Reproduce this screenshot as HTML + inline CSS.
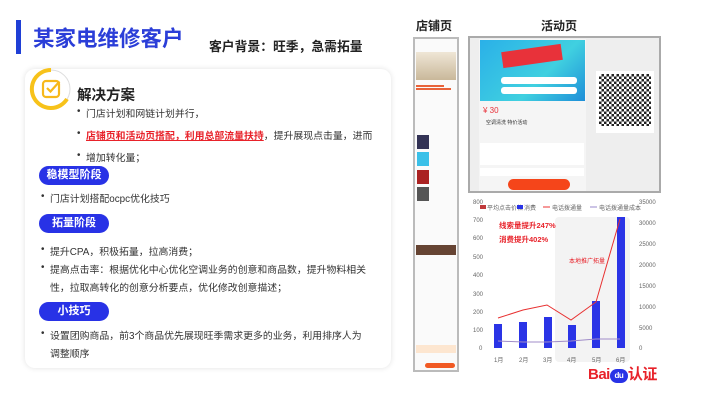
<!DOCTYPE html>
<html><head><meta charset="utf-8"><style>
*{margin:0;padding:0;box-sizing:border-box}
body{width:702px;height:406px;background:#fff;position:relative;overflow:hidden;font-family:"Liberation Sans","Noto Sans CJK SC",sans-serif;color:#333}
.a{position:absolute;white-space:nowrap}
.pill{position:absolute;left:39px;width:70px;height:19px;border-radius:10px;background:#2832e6;color:#fff;font-size:11px;font-weight:bold;text-align:center;line-height:19px}
.t{position:absolute;font-size:9.9px;color:#333;white-space:nowrap}
.t:before{content:"•";position:absolute;left:-9px}
</style></head><body>
<div class="a" style="left:16px;top:20px;width:5px;height:34px;background:#1f3fd6"></div>
<div class="a" style="left:33px;top:22px;font-size:21.5px;font-weight:bold;color:#2b3ed8">某家电维修客户</div>
<div class="a" style="left:209px;top:36px;font-size:12.8px;font-weight:bold;color:#222">客户背景：旺季，急需拓量</div>

<div class="a" style="left:25px;top:69px;width:366px;height:299px;border-radius:10px;background:#fff;box-shadow:0 0 6px rgba(0,0,0,0.12)"></div>
<svg class="a" style="left:29px;top:67px" width="44" height="44" viewBox="0 0 44 44">
<circle cx="22" cy="22" r="19" fill="none" stroke="#ddd" stroke-width="1"/>
<path d="M22 3 A19 19 0 1 0 38 32" fill="none" stroke="#f7c21a" stroke-width="4"/>
<rect x="14" y="14" width="16" height="16" rx="3" fill="none" stroke="#f7b81a" stroke-width="2.2"/>
<path d="M18 21 l3.5 3.5 l9 -10" fill="none" stroke="#f7b81a" stroke-width="2.2"/>
</svg>
<div class="a" style="left:77px;top:84px;font-size:14.5px;font-weight:bold;color:#222">解决方案</div>
<div class="t" style="left:86px;top:106px">门店计划和网链计划并行，</div>
<div class="t" style="left:86px;top:128px"><span style="color:#e8222a;font-weight:bold;text-decoration:underline">店铺页和活动页搭配，利用总部流量扶持</span>，提升展现点击量，进而</div>
<div class="t" style="left:86px;top:150px">增加转化量；</div>
<div class="pill" style="top:166px">稳模型阶段</div>
<div class="t" style="left:50px;top:191px">门店计划搭配ocpc优化技巧</div>
<div class="pill" style="top:214px">拓量阶段</div>
<div class="t" style="left:50px;top:244px">提升CPA，积极拓量，拉高消费；</div>
<div class="t" style="left:50px;top:262px">提高点击率：根据优化中心优化空调业务的创意和商品数，提升物料相关</div>
<div class="a" style="left:50px;top:280px;font-size:9.9px">性，拉取高转化的创意分析要点，优化修改创意描述；</div>
<div class="pill" style="top:302px">小技巧</div>
<div class="t" style="left:50px;top:328px">设置团购商品，前3个商品优先展现旺季需求更多的业务，利用排序人为</div>
<div class="a" style="left:50px;top:346px;font-size:9.9px">调整顺序</div>

<div class="a" style="left:416px;top:17px;font-size:12px;font-weight:bold;color:#222">店铺页</div>
<div class="a" style="left:541px;top:17px;font-size:12px;font-weight:bold;color:#222">活动页</div>
<div class="a" style="left:413px;top:37px;width:46px;height:335px;border:2px solid #bbb;background:#fafafa"></div>
<div class="a" style="left:416px;top:52px;width:40px;height:28px;background:linear-gradient(#efe6d6,#c9b89a)"></div>
<div class="a" style="left:416px;top:85px;width:28px;height:2px;background:#e8633a"></div>
<div class="a" style="left:416px;top:88px;width:35px;height:2px;background:#e8633a"></div>
<div class="a" style="left:417px;top:135px;width:12px;height:14px;background:#335"></div>
<div class="a" style="left:417px;top:152px;width:12px;height:14px;background:#3ac0e8"></div>
<div class="a" style="left:417px;top:170px;width:12px;height:14px;background:#a22"></div>
<div class="a" style="left:417px;top:187px;width:12px;height:14px;background:#555"></div>
<div class="a" style="left:416px;top:245px;width:40px;height:10px;background:#643"></div>
<div class="a" style="left:416px;top:345px;width:40px;height:8px;background:#fde6d0"></div>
<div class="a" style="left:425px;top:363px;width:30px;height:5px;background:#f15a24;border-radius:3px"></div>

<div class="a" style="left:468px;top:36px;width:193px;height:157px;border:2px solid #aaa;background:#eee"></div>
<div class="a" style="left:479px;top:39px;width:107px;height:152px;background:#f5f5f5"></div>
<div class="a" style="left:480px;top:40px;width:105px;height:61px;background:linear-gradient(135deg,#2ab0e8,#40d0e0 60%,#1e8ed8)"></div>
<div class="a" style="left:502px;top:48px;width:60px;height:16px;background:#e8323a;transform:rotate(-8deg)"></div>
<div class="a" style="left:501px;top:77px;width:76px;height:7px;background:#fff;border-radius:3px"></div>
<div class="a" style="left:501px;top:87px;width:76px;height:7px;background:#fff;border-radius:3px"></div>
<div class="a" style="left:483px;top:106px;font-size:8px;color:#e8323a">¥ 30</div>
<div class="a" style="left:486px;top:119px;font-size:5px;color:#333">空调清洗 特价活动</div>
<div class="a" style="left:480px;top:143px;width:104px;height:22px;background:#fff"></div>
<div class="a" style="left:480px;top:168px;width:104px;height:8px;background:#fff"></div>
<div class="a" style="left:508px;top:179px;width:62px;height:11px;background:#f5451a;border-radius:6px"></div>
<div class="a" style="left:596px;top:71px;width:58px;height:62px;background:#fff"></div>
<div class="a" style="left:599px;top:74px;width:52px;height:52px;background:repeating-conic-gradient(#222 0 25%,#fff 0 50%) 0 0/5px 5px"></div>

<svg class="a" style="left:468px;top:195px" width="200" height="175" viewBox="468 195 200 175">
<rect x="470" y="197" width="186" height="168" fill="#fff"/>
<rect x="555" y="217" width="75" height="145" rx="4" fill="#f3f3f3"/>
<g font-size="6" fill="#666" font-family="Liberation Sans">
<text x="473" y="204">800</text><text x="473" y="222">700</text><text x="473" y="240">600</text><text x="473" y="259">500</text><text x="473" y="277">400</text><text x="473" y="296">300</text><text x="473" y="314">200</text><text x="473" y="332">100</text><text x="479" y="350">0</text>
<text x="639" y="204">35000</text><text x="639" y="225">30000</text><text x="639" y="246">25000</text><text x="639" y="267">20000</text><text x="639" y="288">15000</text><text x="639" y="309">10000</text><text x="639" y="330">5000</text><text x="639" y="350">0</text>
<text x="494" y="362">1月</text><text x="519" y="362">2月</text><text x="543" y="362">3月</text><text x="567" y="362">4月</text><text x="592" y="362">5月</text><text x="616" y="362">6月</text>
<text x="487" y="210">平均点击价格</text><text x="524" y="210">消费</text><text x="552" y="210">电话拨通量</text><text x="599" y="210">电话拨通量成本</text>
</g>
<rect x="480" y="205" width="6" height="4" fill="#c0393b"/><rect x="517" y="205" width="6" height="4" fill="#2832e6"/>
<line x1="543" y1="207" x2="550" y2="207" stroke="#e33"/><line x1="590" y1="207" x2="597" y2="207" stroke="#98c"/>
<g fill="#2a34e6"><rect x="494" y="324" width="8" height="24"/><rect x="519" y="322" width="8" height="26"/><rect x="544" y="317" width="8" height="31"/><rect x="568" y="325" width="8" height="23"/><rect x="592" y="301" width="8" height="47"/><rect x="617" y="217" width="8" height="131"/></g>
<polyline points="498,318 523,310 547,305 571,320 596,302 620,219" fill="none" stroke="#e83030" stroke-width="1"/>
<polyline points="498,341 523,342 547,342 571,341 596,339 620,339" fill="none" stroke="#a08cc8" stroke-width="1"/>
<text x="499" y="228" font-size="7.5" font-weight="bold" fill="#e8222a">线索量提升247%</text>
<text x="499" y="242" font-size="7.5" font-weight="bold" fill="#e8222a">消费提升402%</text>
<text x="569" y="263" font-size="6" fill="#e8222a">本地推广拓量</text>
</svg>
<div class="a" style="left:588px;top:363px;font-size:15px;font-weight:bold;color:#e8222a;letter-spacing:-0.5px">Bai<span style="display:inline-block;width:18px;height:14px;background:#2832e6;border-radius:8px;color:#fff;font-size:8px;text-align:center;line-height:14px;vertical-align:1px">du</span>认证</div>
</body></html>
